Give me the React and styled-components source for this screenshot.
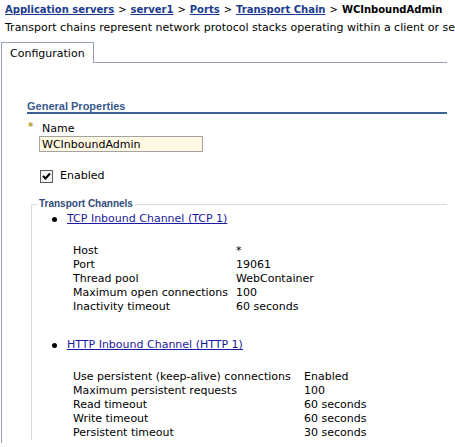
import React from 'react'
import styled, { createGlobalStyle } from 'styled-components'

const GlobalStyle = createGlobalStyle`
    body {
        margin: 0;
        background: #ffffff;
        font-family: "DejaVu Sans", Verdana, sans-serif;
        font-size: 11px;
        color: #000000;
    }
`

const Page = styled.div`
    width: 455px;
    height: 447px;
    overflow: hidden;
    white-space: nowrap;
`

const Breadcrumb = styled.div`
    margin: 3px 0 0 5px;
    line-height: 14px;
    font-size: 10px;
    font-weight: bold;
`

const Crumb = styled.a`
    color: #1a3b8e;
    text-decoration: underline;
`

const Sep = styled.span`
    font-weight: normal;
    margin: 0 4px;
`

const Description = styled.div`
    margin: 4px 0 0 5px;
    line-height: 14px;
`

const TabBar = styled.div`
    display: flex;
    margin: 7px 0 0 1px;
    width: 446px;
`

const Tab = styled.div`
    height: 20px;
    line-height: 22px;
    padding: 0 8px;
    border: 1px solid #98a1bb;
    border-bottom: none;
    background: #ffffff;
`

const TabFill = styled.div`
    flex: 1;
    border-bottom: 1px solid #98a1bb;
`

const Panel = styled.div`
    margin-left: 1px;
    width: 420px;
    border-left: 1px solid #98a1bb;
    padding: 37px 0 3px 25px;
`

const SectionTitle = styled.div`
    font-family: "Liberation Sans", Arial, sans-serif;
    font-size: 11px;
    font-weight: bold;
    line-height: 12px;
    color: #385a8c;
    border-bottom: 2px solid #3a6191;
`

const FieldLabel = styled.div`
    display: flex;
    align-items: center;
    margin-top: 8px;
    line-height: 14px;
`

const Required = styled.span`
    width: 14px;
    padding-left: 1px;
    color: #a99c22;
    font-size: 10px;
    font-weight: bold;
    margin-top: -4px;
`

const TextInput = styled.input`
    display: block;
    box-sizing: border-box;
    margin-left: 12px;
    width: 164px;
    height: 16px;
    padding: 0 2px;
    border: 1px solid #a3a3a3;
    background: #fff9e3;
    font-family: "DejaVu Sans", Verdana, sans-serif;
    font-size: 11px;
    color: #000000;
    outline: none;
`

const CheckRow = styled.label`
    display: flex;
    align-items: center;
    margin: 17px 0 0 13px;
    line-height: 14px;
`

const CheckBox = styled.span`
    box-sizing: border-box;
    width: 13px;
    height: 13px;
    border: 1px solid #5a5a5a;
    background: #f4f4f4;
    margin-right: 7px;
    display: flex;
    align-items: center;
    justify-content: center;
`

const Fieldset = styled.fieldset`
    margin: 15px 0 0 4px;
    padding: 0;
    border: 1px solid #dcdcdc;
    border-right: none;
    border-bottom: none;
`

const Legend = styled.legend`
    margin-left: 5px;
    padding: 0 2px;
    font-family: "Liberation Sans", Arial, sans-serif;
    font-size: 10px;
    font-weight: bold;
    line-height: 12px;
    color: #2e4a78;
`

const ChannelList = styled.ul`
    list-style: none;
    margin: 2px 0 0;
    padding: 0;
`

const Channel = styled.li`
    margin-top: ${p => p.$gap || 0}px;
`

const ChannelHead = styled.div`
    display: flex;
    align-items: center;
    line-height: 14px;
    padding-left: 20px;
`

const Bullet = styled.span`
    width: 5px;
    height: 5px;
    border-radius: 50%;
    background: #000000;
    margin-right: 10px;
`

const ChannelLink = styled.a`
    color: #1a1aa0;
    text-decoration: underline;
`

const Props = styled.div`
    display: grid;
    grid-template-columns: ${p => p.$labelWidth}px auto;
    margin: 18px 0 0 41px;
    line-height: 14px;
`

const tcp = [
    ['Host', '*'],
    ['Port', '19061'],
    ['Thread pool', 'WebContainer'],
    ['Maximum open connections', '100'],
    ['Inactivity timeout', '60 seconds'],
]

const http = [
    ['Use persistent (keep-alive) connections', 'Enabled'],
    ['Maximum persistent requests', '100'],
    ['Read timeout', '60 seconds'],
    ['Write timeout', '60 seconds'],
    ['Persistent timeout', '30 seconds'],
]

const Check = () => (
    <svg width="9" height="9" viewBox="0 0 9 9">
        <path d="M1 4 L3.5 6.5 L8 1.5" stroke="#000" strokeWidth="2" fill="none" />
    </svg>
)

const App = () => {
  return (
    <Page>
        <GlobalStyle />
        <Breadcrumb>
            <Crumb>Application servers</Crumb><Sep>&gt;</Sep>
            <Crumb>server1</Crumb><Sep>&gt;</Sep>
            <Crumb>Ports</Crumb><Sep>&gt;</Sep>
            <Crumb>Transport Chain</Crumb><Sep>&gt;</Sep>
            WCInboundAdmin
        </Breadcrumb>
        <Description>
            Transport chains represent network protocol stacks operating within a client or server.
        </Description>

        <TabBar>
            <Tab>Configuration</Tab>
            <TabFill />
        </TabBar>

        <Panel>
            <SectionTitle>General Properties</SectionTitle>

            <FieldLabel><Required>*</Required>Name</FieldLabel>
            <TextInput defaultValue="WCInboundAdmin" />

            <CheckRow>
                <CheckBox><Check /></CheckBox>
                Enabled
            </CheckRow>

            <Fieldset>
                <Legend>Transport Channels</Legend>
                <ChannelList>
                    <Channel>
                        <ChannelHead><Bullet /><ChannelLink>TCP Inbound Channel (TCP 1)</ChannelLink></ChannelHead>
                        <Props $labelWidth={163}>
                            {tcp.map(([k, v]) => (
                                <React.Fragment key={k}><span>{k}</span><span>{v}</span></React.Fragment>
                            ))}
                        </Props>
                    </Channel>
                    <Channel $gap={24}>
                        <ChannelHead><Bullet /><ChannelLink>HTTP Inbound Channel (HTTP 1)</ChannelLink></ChannelHead>
                        <Props $labelWidth={231}>
                            {http.map(([k, v]) => (
                                <React.Fragment key={k}><span>{k}</span><span>{v}</span></React.Fragment>
                            ))}
                        </Props>
                    </Channel>
                </ChannelList>
            </Fieldset>
        </Panel>
    </Page>
  )
}

export default App
